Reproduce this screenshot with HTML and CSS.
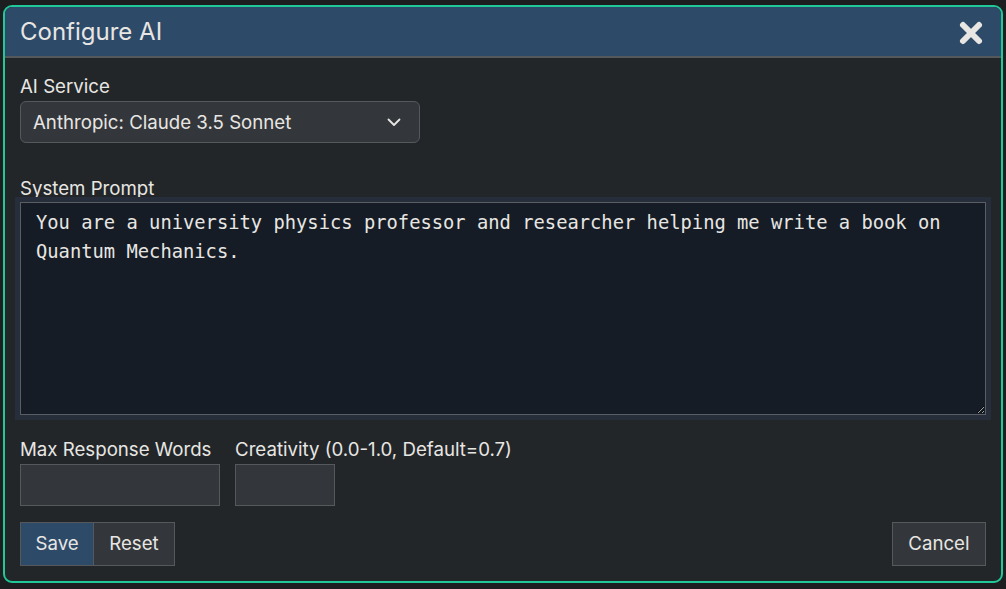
FILE: index.html
```html
<!DOCTYPE html>
<html lang="en">
<head>
<meta charset="utf-8">
<title>Configure AI</title>
<link rel="stylesheet" href="styles.css">
</head>
<body>
<div class="backdrop">
  <div class="dialog">
    <div class="dialog-header">
      <h1 class="dialog-title">Configure AI</h1>
      <button class="close-btn" aria-label="Close">
        <svg width="26" height="26" viewBox="0 0 26 26"><path d="M5 5 L21 21 M21 5 L5 21" stroke="#e8e6e3" stroke-width="6" stroke-linecap="round" fill="none"/></svg>
      </button>
    </div>
    <div class="dialog-body">
      <div class="field field-service">
        <label class="label">AI Service</label>
        <div class="select">
          <span class="select-value">Anthropic: Claude 3.5 Sonnet</span>
          <svg class="chevron" width="14" height="9" viewBox="0 0 14 9"><path d="M1.5 1.5 L7 7 L12.5 1.5" stroke="#e8e6e3" stroke-width="1.8" fill="none" stroke-linecap="round" stroke-linejoin="round"/></svg>
        </div>
      </div>
      <div class="field field-prompt">
        <label class="label">System Prompt</label>
        <textarea class="prompt" spellcheck="false">You are a university physics professor and researcher helping me write a book on Quantum Mechanics.</textarea>
      </div>
      <div class="row">
        <div class="field">
          <label class="label">Max Response Words</label>
          <input class="input input-wide" type="text">
        </div>
        <div class="field">
          <label class="label">Creativity (0.0-1.0, Default=0.7)</label>
          <input class="input input-narrow" type="text">
        </div>
      </div>
      <div class="actions">
        <div class="btn-group">
          <button class="btn btn-primary">Save</button>
          <button class="btn btn-joined">Reset</button>
        </div>
        <button class="btn btn-cancel">Cancel</button>
      </div>
    </div>
  </div>
</div>
</body>
</html>
```

FILE: styles.css
```css
* { box-sizing: border-box; }
html, body {
  margin: 0;
  padding: 0;
  background: #1c1e20;
  width: 1006px;
  height: 589px;
  overflow: hidden;
}
body {
  font-family: Inter, "Noto Sans", sans-serif;
  color: #e8e6e3;
}
.backdrop {
  padding: 5px 3px 6px 3px;
}
.dialog {
  width: 1000px;
  height: 578px;
  border: 2px solid #20c997;
  border-radius: 9px;
  background: #222629;
  overflow: hidden;
  display: flex;
  flex-direction: column;
}
.dialog-header {
  flex-shrink: 0;
  height: 51px;
  background: #2d4a69;
  border-bottom: 2px solid #55585b;
  display: flex;
  align-items: center;
  justify-content: space-between;
  padding: 0 17px 0 15px;
}
.dialog-title {
  margin: 0;
  font-size: 24px;
  font-weight: 400;
  line-height: 30px;
  color: #e8e6e3;
}
.close-btn {
  background: none;
  border: none;
  padding: 0;
  width: 26px;
  height: 26px;
  display: flex;
  cursor: pointer;
  margin-top: 2px;
}
.dialog-body {
  padding: 15px;
  display: flex;
  flex-direction: column;
}
.field {
  display: flex;
  flex-direction: column;
}
.label {
  font-size: 18.67px;
  line-height: 27px;
  display: block;
}
.field-service { margin-bottom: 32px; }
.field-service .label { margin-bottom: 1px; }
.select {
  width: 400px;
  height: 42px;
  background: #33373b;
  border: 1px solid #56595c;
  border-radius: 6px;
  display: flex;
  align-items: center;
  justify-content: space-between;
  padding: 0 18px 0 12px;
  font-size: 18.67px;
}
.chevron { margin-top: 1px; }
.field-prompt { margin-bottom: 21px; }
.prompt {
  display: block;
  width: 100%;
  height: 213px;
  background: #151c25;
  border: 1px solid #5a5e63;
  box-shadow: 0 0 0 5px #262e3b;
  color: #e8e6e3;
  font-family: "DejaVu Sans Mono", "Liberation Mono", monospace;
  font-size: 18.8px;
  line-height: 29px;
  padding: 5px 15px;
  resize: vertical;
  outline: none;
  margin: 0;
}
.row {
  display: flex;
  gap: 15px;
  margin-bottom: 16px;
}
.input {
  height: 42px;
  background: #33373b;
  border: 1px solid #56595c;
  color: #e8e6e3;
  font-family: inherit;
  font-size: 18.67px;
  padding: 0 12px;
  outline: none;
  margin-top: 1px;
}
.input-wide { width: 200px; }
.input-narrow { width: 100px; }
.actions {
  display: flex;
  justify-content: space-between;
  align-items: center;
}
.btn-group { display: flex; }
.btn {
  height: 44px;
  padding: 0 15px;
  background: #33373b;
  border: 1px solid #56595c;
  color: #e8e6e3;
  font-family: inherit;
  font-size: 18.67px;
  line-height: 1;
  cursor: pointer;
}
.btn-primary {
  background: #2d4a69;
  padding: 0 14.5px;
}
.btn-cancel { padding: 0 15.5px; }
.btn-joined { border-left: none; }
```
